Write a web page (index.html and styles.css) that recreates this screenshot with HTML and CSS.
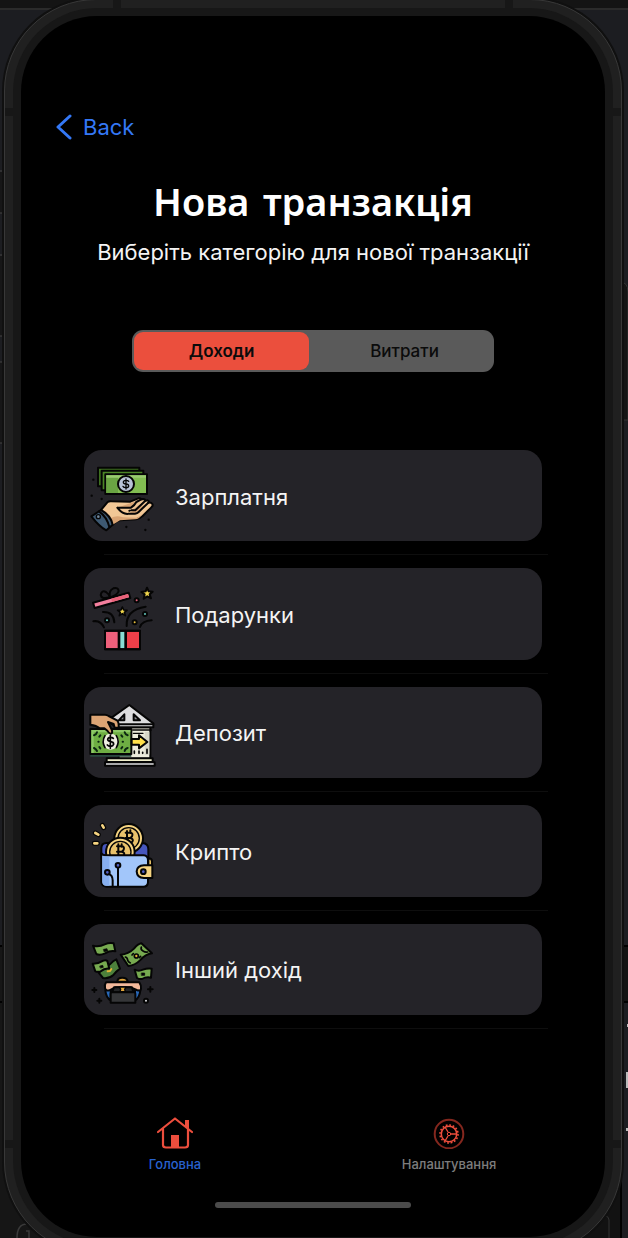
FILE: index.html
```html
<!DOCTYPE html>
<html lang="uk">
<head>
<meta charset="utf-8">
<meta name="viewport" content="width=device-width, initial-scale=1">
<title>Нова транзакція</title>
<link rel="stylesheet" href="styles.css">
</head>
<body>
<div class="stage">
  <svg class="backdrop" viewBox="0 0 628 1238" preserveAspectRatio="none" aria-hidden="true">
    <rect width="628" height="1238" fill="#1c1d21"/>
    <path d="M0 0H628V8H0Z" fill="#141414"/>
    <path d="M0 8H628V10H0Z" fill="#2b2b2b"/>
    <path d="M0 172H4V213H0ZM0 256H4V336H0ZM0 362H4V443H0Z" fill="#161617"/>
    <path d="M0 171H3M0 213H3M0 255H3M0 336H3M0 362H3M0 443H3" stroke="#444" stroke-width="1"/>
    <path d="M620 282Q628 282 628 292V420H620" fill="#151515" stroke="#333"/>
    <path d="M0 946H60V1238H0Z" fill="#161616"/>
    <path d="M0 946H4M0 1002H4" stroke="#000" stroke-width="2"/>
    <path d="M620 946H628V1002H620Z" fill="#131313"/>
    <path d="M620 946H628M620 1002H628" stroke="#000" stroke-width="2"/>
    <path d="M560 1140H621V1238H560Z" fill="#121212"/>
    <path d="M621 1140V1238" stroke="#000" stroke-width="2"/>
    <path d="M609 1238V1220Q609 1217 606 1216" fill="none" stroke="#333"/>
    <path d="M626 1072H628V1088H626ZM627 1024H628V1027H627ZM626 1128H628V1131H626Z" fill="#bbb"/>
    <path d="M27 1224Q17 1224 17 1238M26 1231H29V1238" fill="none" stroke="#3a3a3a" stroke-width="1.5"/>
  </svg>

  <div class="phone">
    <span class="band band-top-left"></span>
    <span class="band band-top-right"></span>
    <span class="band band-upper-left"></span>
    <span class="band band-upper-right"></span>
    <span class="band band-lower-left"></span>
    <span class="band band-lower-right"></span>
    <div class="bezel">
      <div class="screen">
        <a class="back" href="#back">
          <svg class="back-icon" viewBox="0 0 16 26" aria-hidden="true"><path d="M14 2L2 13L14 24"/></svg>
          <span>Back</span>
        </a>

        <main class="content">
          <h1 class="title">Нова транзакція</h1>
          <p class="subtitle">Виберіть категорію для нової транзакції</p>

          <div class="segments">
            <button class="segment is-selected" type="button" aria-pressed="true">Доходи</button>
            <button class="segment" type="button" aria-pressed="false">Витрати</button>
          </div>

          <ul class="categories">
            <li class="category">
              <button class="card" type="button">
                <svg class="card-icon" viewBox="12 12 228 270" aria-hidden="true">
                  <g stroke="#050505" stroke-width="6" stroke-linejoin="round" stroke-linecap="round">
                    <path fill="#3e701f" d="M54 62H178V118H54Z"/>
                    <path fill="#4b8426" d="M65 71H190V130H65Z"/>
                    <path fill="#82bd52" d="M76 82H201V141H76Z"/>
                    <path fill="#6aa443" stroke="none" d="M79 85H114V138H79Z"/>
                    <path fill="#9acb70" stroke="none" d="M79 85H198V92H79Z"/>
                    <circle cx="138" cy="111" r="24" fill="#b9c3d8"/>
                    <path fill="none" stroke-width="4" d="M146 103Q144 100 138 100Q130 100 130 106Q130 111 138 111Q146 111 146 117Q146 122 138 122Q131 122 129 118M138 96V126"/>
                    <path fill="#f1c796" d="M63 189L82 166Q87 162 94 163L151 164L175 154Q181 153 184 157L190 156Q195 156 196 161L203 160Q209 162 205 167Q213 165 217 171Q220 176 214 181L188 207Q178 216 168 217L120 220Q111 221 104 228L98 233Z"/>
                    <path fill="#d9a474" stroke="none" d="M88 216Q105 203 129 211L169 212Q180 209 188 200Q177 217 166 217L120 220L98 233Z"/>
                    <path fill="#d9a474" d="M112 182H153Q164 175 169 165L184 157M142 201Q126 199 117 188L112 182M145 200H165Q172 199 176 195L205 167M154 190H166L196 161M148 191H149"/>
                    <path fill="#3d5972" d="M34 208L63 189Q92 205 98 233L79 250Q59 240 34 208Z"/>
                    <path fill="none" d="M57 193Q81 210 88 240"/>
                    <circle cx="55" cy="209" r="6" fill="#71889d" stroke-width="4"/>
                  </g>
                  <path d="M40 98h.1M35 146h.1M65 156h.1M206 218h.1M139 240h.1M196 249h.1" stroke="#050505" stroke-width="7" stroke-linecap="round"/>
                </svg>
                <span class="card-label">Зарплатня</span>
              </button>
            </li>
            <li class="category">
              <button class="card" type="button">
                <svg class="card-icon" viewBox="12 13 228 270" aria-hidden="true">
                  <g fill="none" stroke="#050505" stroke-width="6" stroke-linejoin="round" stroke-linecap="round">
                    <path fill="#f47f9e" d="M39 114L146 84L151 100L44 130Z"/>
                    <path fill="#e96279" stroke="none" d="M94 102L144 88L147 97L96 112Z"/>
                    <path d="M90 98Q64 105 62 91Q65 75 78 82Q87 88 90 98Q85 78 100 71Q115 67 116 79Q113 91 90 98"/>
                    <path fill="#f1d64c" d="M201 69L206 80L218 81L209 89L213 101L202 95L191 102L194 89L184 82L197 80Z"/>
                    <path fill="#f1d64c" stroke-width="5" d="M127 127L131 136L141 137L133 143L136 153L127 147L118 153L121 143L113 137L123 136Z"/>
                    <path d="M40 170Q61 166 72 188M69 142Q101 141 103 173M140 184Q137 136 197 126M180 187Q186 169 215 167"/>
                    <circle cx="170" cy="107" r="6" fill="#e5647b"/>
                    <circle cx="81" cy="167" r="6" fill="#66c9c0"/>
                    <circle cx="195" cy="148" r="6" fill="#66c9c0"/>
                    <circle cx="164" cy="173" r="6" fill="#e7be3d"/>
                    <path fill="#ef607b" d="M75 198H116V254H75Z"/>
                    <path fill="#89ddd4" d="M118 198H136V254H118Z"/>
                    <path fill="#ee3f49" d="M138 198H180V254H138Z"/>
                    <path d="M75 198H180V254H75Z"/>
                  </g>
                </svg>
                <span class="card-label">Подарунки</span>
              </button>
            </li>
            <li class="category">
              <button class="card" type="button">
                <svg class="card-icon" viewBox="12 15 228 270" aria-hidden="true">
                  <g stroke="#050505" stroke-width="6" stroke-linejoin="round" stroke-linecap="round">
                    <path fill="#ecebdc" d="M116 136H211V230H116Z"/>
                    <path fill="#d6d6c8" stroke="none" d="M194 150H208V218H194Z"/>
                    <path fill="#dddddf" d="M82 116L148 69L220 124V136H110Z"/>
                    <path fill="none" d="M108 127H220"/>
                    <path fill="#8c8d92" d="M133 97V115H116ZM161 97L180 115H161Z"/>
                    <path fill="none" stroke-width="4" d="M158 144H214M160 154H189"/>
                    <path fill="#f0efcb" d="M80 229H218V240H80Z"/>
                    <path fill="#dedee0" d="M75 241H224V251H75Z"/>
                    <path fill="#6eae43" d="M31 141H154V216H31Z"/>
                    <path fill="#8dc966" stroke="none" d="M34 144H151V151H34ZM34 151H41V213H34Z"/>
                    <path fill="#28483e" stroke="none" d="M31 219H154V224H31Z"/>
                    <circle cx="92" cy="179" r="24" fill="#efefe2" stroke="none"/>
                    <path fill="none" stroke-width="5" d="M75 161Q64 179 75 197M109 161Q120 179 109 197M100 169Q97 166 91 166Q83 167 83 173Q84 178 92 179Q101 180 101 187Q99 193 92 193Q85 193 82 189M91 160V199"/>
                    <path fill="none" stroke="#0b2611" d="M42 160Q49 158 51 151M42 198Q48 201 51 207M134 151Q136 158 143 160M134 207Q136 199 143 198M55 179H56M128 179H129M61 160L58 164M61 199L58 195M124 160L127 164M124 199L127 195"/>
                    <path fill="#dca474" d="M31 98H75Q80 98 86 102L111 115Q117 120 116 137H104L101 126L84 120L96 145Q98 155 92 155Q86 154 82 146L73 139H59Q49 130 31 128Z"/>
                    <path fill="#ffe04b" d="M155 171H177V160L202 180L177 199V188H155Z"/>
                    <path fill="none" stroke-width="5" d="M163 207V214M177 207V214M188 211V214M201 202V214"/>
                  </g>
                </svg>
                <span class="card-label">Депозит</span>
              </button>
            </li>
            <li class="category">
              <button class="card" type="button">
                <svg class="card-icon" viewBox="12 15 228 270" aria-hidden="true">
                  <g stroke="#050505" stroke-width="6" stroke-linejoin="round" stroke-linecap="round">
                    <path fill="#4656bd" d="M64 170V142Q64 126 80 126H187Q205 127 205 144V174H64Z"/>
                    <circle cx="146" cy="112" r="43" fill="#f6d481"/>
                    <circle cx="146" cy="112" r="32" fill="#e9c26b" stroke-width="4"/>
                    <path fill="none" d="M137 95H152Q160 97 156 106L151 111Q162 114 157 122Q154 127 144 126M141 90V128M151 88V96M137 111H152M148 126V131"/>
                    <circle cx="121" cy="153" r="43" fill="#f6d481"/>
                    <circle cx="121" cy="153" r="32" fill="#e9c26b" stroke-width="4"/>
                    <path fill="none" d="M111 136H127Q135 138 130 148L125 152Q137 155 131 164H111M115 130V170M125 130V137M111 152H127M125 164V170"/>
                    <path fill="#a2c6fa" d="M64 157Q68 163 80 163H191Q204 164 204 178V244Q203 257 190 257H79Q65 256 64 243Z"/>
                    <path fill="#87aff0" stroke="none" d="M67 165Q76 167 88 167V254H80Q67 253 67 242Z"/>
                    <path fill="#e4bd62" d="M205 172Q216 172 216 181V196H205Z"/>
                    <path fill="#f6d481" d="M217 193H192Q171 194 170 211Q171 230 192 231H217Z"/>
                    <circle cx="190" cy="212" r="7" fill="#5362c6"/>
                    <path fill="none" d="M114 200V256M84 218Q98 221 98 238V256"/>
                    <circle cx="114" cy="193" r="7" fill="#5362c6"/>
                    <circle cx="82" cy="214" r="7" fill="#5362c6"/>
                  </g>
                  <g fill="none" stroke-linecap="round">
                    <path stroke="#050505" stroke-width="15" d="M67 73L71 80M46 96L55 101M43 127H52"/>
                    <path stroke="#f6d481" stroke-width="8" d="M67 73L71 80M46 96L55 101M43 127H52"/>
                  </g>
                </svg>
                <span class="card-label">Крипто</span>
              </button>
            </li>
            <li class="category">
              <button class="card" type="button">
                <svg class="card-icon" viewBox="12 17 228 270" aria-hidden="true">
                  <g stroke="#050505" stroke-width="6" stroke-linejoin="round" stroke-linecap="round">
                    <path fill="#77aa50" d="M39 82Q57 87 74 78Q88 72 101 75L106 99Q91 96 75 105Q60 112 49 107Z"/>
                    <path fill="#050505" stroke-width="2" d="M71 93L81 91L83 98L73 100Z"/>
                    <path fill="#77aa50" d="M122 109Q145 108 162 91Q173 77 184 75L216 105Q197 107 180 126Q165 141 145 143Z"/>
                    <path fill="none" stroke-width="5" d="M136 116Q143 118 143 126Q145 131 151 134M184 86Q181 94 189 98Q195 102 203 101M160 106L156 110M178 118L182 114"/>
                    <circle cx="169" cy="113" r="6" fill="#e4b337" stroke-width="5"/>
                    <path fill="#4d803b" d="M91 137Q99 127 109 123L120 151Q110 158 101 169Q87 182 69 179L56 163Z"/>
                    <path fill="#77aa50" d="M38 136Q54 137 70 127Q78 124 82 128L88 151Q74 149 62 159Q54 162 46 159Z"/>
                    <path fill="#050505" stroke-width="2" d="M60 143L68 141L70 147L62 149Z"/>
                    <path fill="none" stroke="#e4b337" d="M83 159L90 158L94 152"/>
                    <path fill="#77aa50" d="M164 154Q176 160 189 154Q202 149 215 151L213 178Q198 175 186 182Q177 183 171 179Z"/>
                    <path fill="#050505" stroke-width="2" d="M185 164H194V171H185Z"/>
                    <path fill="#2868b8" d="M76 216L92 210V246Q78 238 76 216ZM181 216L165 210V246Q179 238 181 216Z"/>
                    <path fill="#f3b99b" d="M78 192H178Q184 200 183 212Q181 219 170 215L152 207H106L88 216Q77 219 75 209Q73 199 78 192Z"/>
                    <path fill="#242526" d="M102 207H156L160 222H96Z"/>
                    <path fill="#e1a53c" d="M112 190Q112 178 127 178Q142 178 143 190Z"/>
                    <path fill="#e1a53c" stroke-width="4" d="M118 206H138L134 213L136 220H120L122 213Z"/>
                    <path fill="#353638" d="M92 226Q92 222 96 222H162Q166 222 166 226V253H92Z"/>
                    <path fill="none" d="M43 209V221M37 215H49M58 241V253M52 247H64M211 206V220M204 213H218"/>
                    <circle cx="198" cy="247" r="6" fill="#d9d9dc"/>
                  </g>
                </svg>
                <span class="card-label">Інший дохід</span>
              </button>
            </li>
          </ul>
        </main>

        <nav class="tabs">
          <a class="tab is-active" href="#home">
            <svg class="tab-icon" viewBox="0 0 36 32" aria-hidden="true">
              <path fill="none" stroke="#ed4e3d" stroke-width="2.2" stroke-linecap="round" stroke-linejoin="round" d="M1 15L18 1.5L35 15M6 12V28Q6 30.5 9 30.5H28Q31 30.5 31 28V12"/>
              <path fill="#ed4e3d" d="M14 18H22V31H14ZM28 3H32V12L28 9Z"/>
            </svg>
            <span>Головна</span>
          </a>
          <a class="tab" href="#settings">
            <svg class="tab-icon" viewBox="0 0 36 32" aria-hidden="true">
              <circle cx="18" cy="17" r="14.3" fill="none" stroke="#84271e" stroke-width="2"/>
              <circle cx="18" cy="17" r="9" fill="none" stroke="#ed4e3d" stroke-width="1.6" stroke-dasharray="1.8 1.73"/>
              <circle cx="18" cy="17" r="7.7" fill="none" stroke="#ed4e3d" stroke-width="1.5"/>
              <circle cx="18" cy="17" r="1.7" fill="none" stroke="#ed4e3d"/>
              <path d="M20 17H26M17 15L14 10M17 19L14 24" stroke="#ed4e3d" stroke-width="1.3"/>
            </svg>
            <span>Налаштування</span>
          </a>
        </nav>
        <div class="home-indicator"></div>
      </div>
    </div>
  </div>
</div>
</body>
</html>
```
FILE: styles.css
```css
* {
  box-sizing: border-box;
}

body {
  margin: 0;
  background: #1c1d21;
  font-family: Inter, "Liberation Sans", sans-serif;
}

button {
  border: 0;
  padding: 0;
  font: inherit;
  cursor: pointer;
}

a {
  text-decoration: none;
}

.stage {
  position: relative;
  height: 100vh;
  min-height: 900px;
  overflow: hidden;
  display: flow-root;
}

.backdrop {
  position: absolute;
  inset: 0;
  width: 100%;
  height: 100%;
}

.phone {
  position: relative;
  margin: -1px 6px 0 4px;
  padding: 8px;
  border: 1px solid #383838;
  border-radius: 92px;
  background: #202020;
  box-shadow: 0 0 0 2px #101010;
}

.bezel {
  padding: 8px;
  border-radius: 84px;
  background: #171717;
}

.band {
  position: absolute;
  width: 8px;
  height: 8px;
  background: #171717;
}

.band-top-left { top: 0; left: 108px; }
.band-top-right { top: 0; right: 108px; }
.band-upper-left { top: 108px; left: 0; }
.band-upper-right { top: 108px; right: 0; }
.band-lower-left { bottom: 105px; left: 0; }
.band-lower-right { bottom: 105px; right: 0; }

.screen {
  display: flex;
  flex-direction: column;
  min-height: calc(100vh - 17px);
  padding: 96px 0 29px;
  border-radius: 76px;
  background: #000;
  color: #f4f4f4;
}

.back {
  display: flex;
  align-items: center;
  align-self: flex-start;
  gap: 11px;
  margin-left: 35px;
  color: #3478f6;
  font-size: 22px;
  line-height: 30px;
}

.back-icon {
  width: 16px;
  height: 26px;
  fill: none;
  stroke: currentColor;
  stroke-width: 3;
  stroke-linecap: round;
  stroke-linejoin: round;
}

.content {
  flex: 1;
  display: flex;
  flex-direction: column;
  padding: 38px 63px 0;
}

.title {
  margin: 0 -40px 10px;
  color: #fff;
  font-family: "Comic Neue", "Noto Sans", sans-serif;
  font-size: 38px;
  font-weight: 600;
  line-height: 48px;
  text-align: center;
}

.subtitle {
  margin: 0 -40px 64px;
  font-size: 22px;
  line-height: 28px;
  text-align: center;
}

.segments {
  display: grid;
  grid-template-columns: 1fr 1fr;
  gap: 8px;
  margin: 0 48px 78px;
  padding: 2px;
  border-radius: 11px;
  background: #5a5a5a;
}

.segment {
  border-radius: 9px;
  background: transparent;
  color: #0b0b0b;
  font-size: 17px;
  font-weight: 500;
  line-height: 38px;
}

.segment.is-selected {
  background: #eb4f3d;
  font-weight: 600;
}

.categories {
  flex: 1;
  display: grid;
  grid-auto-rows: 1fr;
  gap: 13px;
  margin: 0;
  padding: 0;
  list-style: none;
}

.category {
  display: flex;
  flex-direction: column;
}

.category::after {
  content: "";
  height: 1px;
  margin: 13px -6px 0 20px;
  background: #0e0e0e;
}

.card {
  flex: 1;
  display: flex;
  align-items: center;
  gap: 15px;
  border-radius: 18px;
  background: #242328;
  color: #f4f4f4;
  font-size: 22px;
  line-height: 28px;
  text-align: left;
}

.card-icon {
  width: 76px;
  height: 90px;
}

.card-label {
  padding-top: 2px;
}

.tabs {
  display: grid;
  grid-template-columns: 1fr 1fr;
  margin: 88px 19px 30px 17px;
}

.tab {
  display: flex;
  flex-direction: column;
  align-items: center;
  gap: 7px;
  color: #7d7d7d;
  font-size: 13px;
  font-weight: 500;
  line-height: 16px;
}

.tab.is-active {
  color: #2862cf;
}

.tab-icon {
  width: 36px;
  height: 32px;
}

.home-indicator {
  align-self: center;
  width: 196px;
  height: 6px;
  border-radius: 3px;
  background: #4b4b4b;
}
```
